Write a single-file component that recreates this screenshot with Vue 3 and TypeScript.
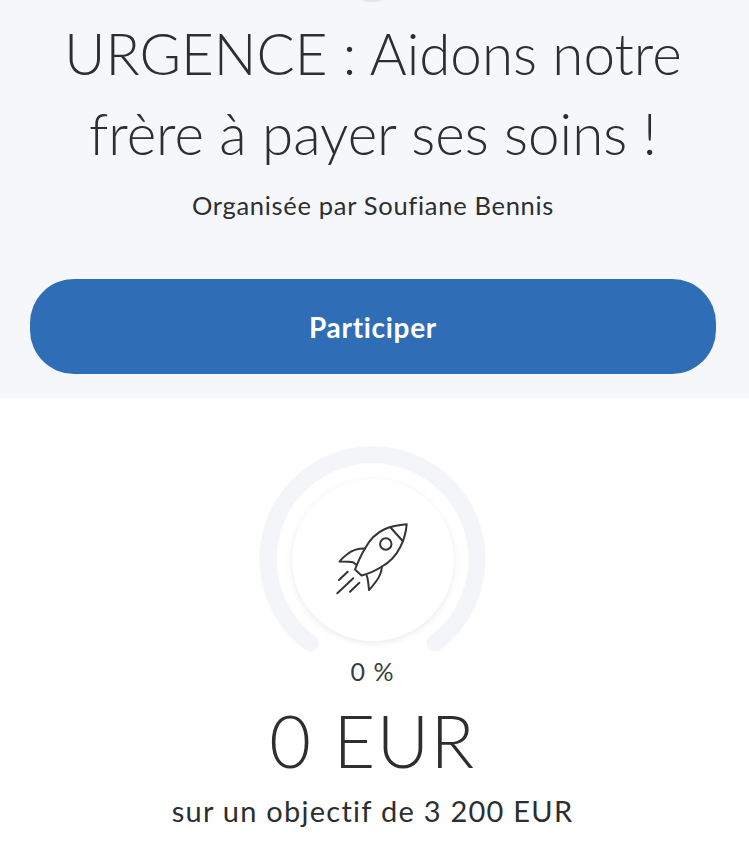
<script setup lang="ts">
const title = ['URGENCE : Aidons notre', 'frère à payer ses soins !']
const organizer = 'Soufiane Bennis'
const percent = 0
const raised = 0
const goal = '3 200'
</script>

<template>
  <div class="page">
    <span class="avatar-edge"></span>
    <header class="hero">
      <h1 class="title">
        <span v-for="line in title" :key="line" class="title-line">{{ line }}</span>
      </h1>
      <p class="organizer">Organisée par {{ organizer }}</p>
      <button class="cta" type="button">Participer</button>
    </header>

    <section class="progress">
      <div class="gauge">
        <svg class="gauge-track" viewBox="0 0 225 225" width="225" height="225" fill="none">
          <path
            d="M50 196A104.5 104.5 0 1 1 175 196"
            stroke="#f3f5f9"
            stroke-width="15"
            stroke-linecap="round"
          />
        </svg>
        <div class="gauge-core">
          <svg class="rocket" viewBox="0 0 100 95" width="100" height="95" fill="none" stroke="#333538" stroke-width="2" stroke-linejoin="round" stroke-linecap="round">
            <path d="M86.7 14.3C78 15 71 16.5 65 19C56 23 50 29 45 38.5C41 45 38 52 35 59.5L41.5 65.5C49 63.5 56 60.5 62 56.5C70 52 76 45.5 80 37.5C84 30 86 22 86.7 14.3Z" />
            <path d="M71 18L82.7 31" />
            <circle cx="65.8" cy="34" r="5.7" />
            <path d="M45 38.5C38 38.5 32 40 27.5 44C24 46.5 21.5 49 19.5 51.5C25 51.5 30 51.5 33.5 52.5L36.5 55" />
            <path d="M62 56.5C61.5 62 59.5 67 56 71.5C53.5 75 51.5 77.5 49 80C48.5 74 48 69 46.7 65.5" />
            <path d="M27.7 61.7L19 70M33.3 68.3L17.3 83.3M39.3 72.7L30 81.7" />
          </svg>
        </div>
      </div>
      <p class="percent">{{ percent }} %</p>
      <p class="raised">{{ raised }} EUR</p>
      <p class="goal">sur un objectif de {{ goal }} EUR</p>
    </section>
  </div>
</template>

<style>
html,
body {
  margin: 0;
  background: #ffffff;
}
</style>

<style scoped>
.page {
  position: relative;
  width: 749px;
  height: 857px;
  overflow: hidden;
  font-family: Lato, "Open Sans", sans-serif;
  color: #2c2e2f;
}

.avatar-edge {
  position: absolute;
  left: 354px;
  top: -18px;
  width: 36px;
  height: 20px;
  border-radius: 50%;
  background: #e3e5e9;
}

.hero {
  display: flex;
  flex-direction: column;
  align-items: center;
  height: 398px;
  box-sizing: border-box;
  padding: 13px 33px 0 30px;
  background: #f5f7fb;
}

.title {
  margin: 0;
  font-size: 56.5px;
  font-weight: 300;
  line-height: 80px;
  text-align: center;
  white-space: nowrap;
}

.title-line {
  display: block;
}

.organizer {
  margin: 15px 0 0;
  font-size: 25.5px;
  letter-spacing: 0.7px;
  line-height: 34px;
}

.cta {
  flex: none;
  width: 686px;
  height: 95px;
  margin-top: 57px;
  border: 0;
  border-radius: 44px;
  background: #2f6eb6;
  color: #ffffff;
  font-family: inherit;
  font-size: 28px;
  font-weight: 700;
  letter-spacing: 0.7px;
}

.progress {
  display: flex;
  flex-direction: column;
  align-items: center;
  padding: 49px 4px 0 0;
}

.gauge {
  position: relative;
  display: grid;
  place-items: center;
  width: 225px;
  height: 225px;
  margin-bottom: -16px;
}

.gauge-track {
  position: absolute;
  inset: 0;
  filter: drop-shadow(0 0 1px rgba(120, 130, 160, 0.2));
}

.gauge-core {
  position: relative;
  display: grid;
  place-items: center;
  width: 162px;
  height: 162px;
  border-radius: 50%;
  background: #ffffff;
  box-shadow: 0 2px 6px rgba(90, 100, 130, 0.13);
}

.rocket {
  transform: translate(-3px, -2px);
}

.percent {
  margin: 0;
  font-size: 25px;
  letter-spacing: 1px;
  line-height: 30px;
  color: #3a3d42;
}

.raised {
  margin: 12px 0 0;
  font-size: 72px;
  font-weight: 300;
  letter-spacing: 1.5px;
  line-height: 84px;
}

.goal {
  margin: 11px 0 0;
  font-size: 29px;
  letter-spacing: 1.26px;
  line-height: 36px;
}
</style>
